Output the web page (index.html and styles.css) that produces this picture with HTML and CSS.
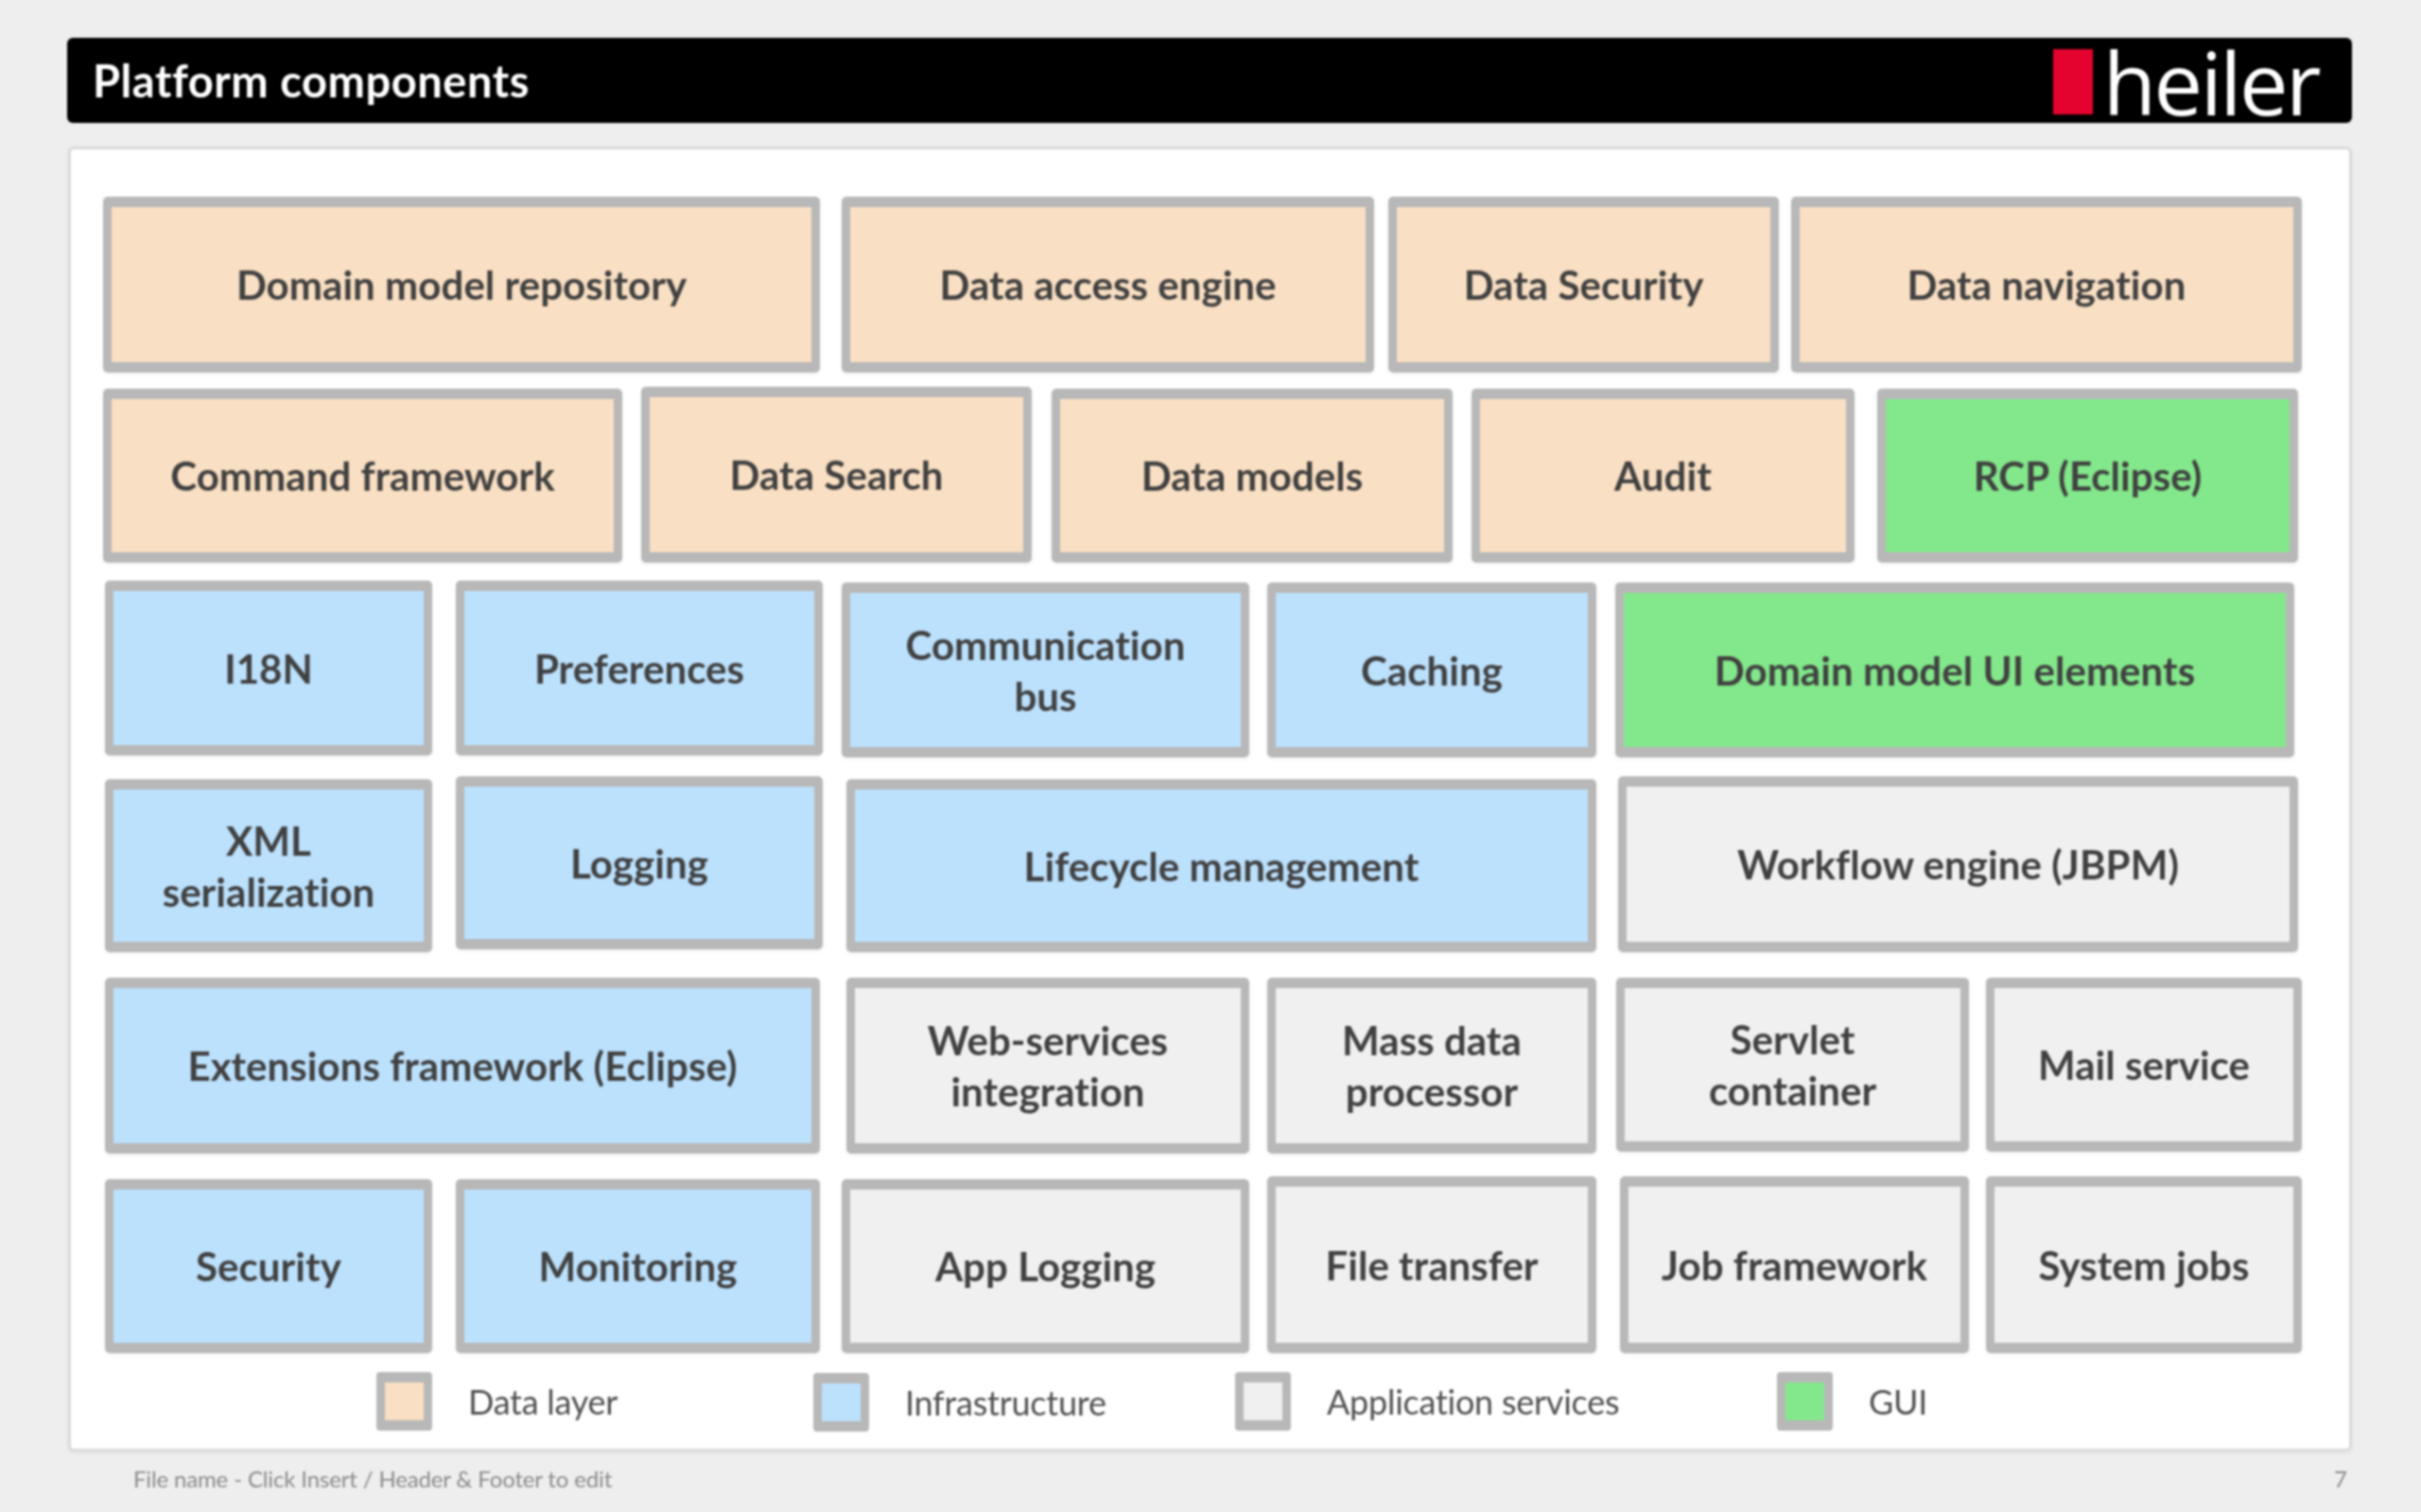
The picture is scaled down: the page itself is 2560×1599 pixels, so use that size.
FILE: index.html
```html
<!DOCTYPE html>
<html lang="en">
<head>
<meta charset="utf-8">
<title>Platform components</title>
<link rel="stylesheet" href="styles.css">
</head>
<body>
<div class="slide">
  <header class="header">
    <h1 class="title">Platform components</h1>
    <div class="logo"><span class="logo-mark"></span><span class="logo-text">heiler</span></div>
  </header>
  <main class="panel">
    <div class="row row1">
      <div class="box data">Domain model repository</div>
      <div class="box data">Data access engine</div>
      <div class="box data">Data Security</div>
      <div class="box data">Data navigation</div>
    </div>
    <div class="row row2">
      <div class="box data">Command framework</div>
      <div class="box data up2">Data Search</div>
      <div class="box data">Data models</div>
      <div class="box data">Audit</div>
      <div class="box gui">RCP (Eclipse)</div>
    </div>
    <div class="row row3">
      <div class="box infra">I18N</div>
      <div class="box infra">Preferences</div>
      <div class="box infra down2">Communication<br>bus</div>
      <div class="box infra down2">Caching</div>
      <div class="box gui down2">Domain model UI elements</div>
    </div>
    <div class="row row4">
      <div class="box infra down3">XML<br>serialization</div>
      <div class="box infra">Logging</div>
      <div class="box infra down3">Lifecycle management</div>
      <div class="box app long3">Workflow engine (JBPM)</div>
    </div>
    <div class="row row5">
      <div class="box infra">Extensions framework (Eclipse)</div>
      <div class="box app">Web-services<br>integration</div>
      <div class="box app">Mass data<br>processor</div>
      <div class="box app short2">Servlet<br>container</div>
      <div class="box app short2">Mail service</div>
    </div>
    <div class="row row6">
      <div class="box infra">Security</div>
      <div class="box infra">Monitoring</div>
      <div class="box app">App Logging</div>
      <div class="box app up3">File transfer</div>
      <div class="box app up3">Job framework</div>
      <div class="box app up3">System jobs</div>
    </div>
    <div class="legend">
      <div class="legend-item item-data"><span class="swatch data"></span><span class="legend-label">Data layer</span></div>
      <div class="legend-item item-infra"><span class="swatch infra"></span><span class="legend-label">Infrastructure</span></div>
      <div class="legend-item item-app"><span class="swatch app"></span><span class="legend-label">Application services</span></div>
      <div class="legend-item item-gui"><span class="swatch gui"></span><span class="legend-label">GUI</span></div>
    </div>
  </main>
  <footer class="footer">
    <span class="footer-note">File name - Click Insert / Header &amp; Footer to edit</span>
    <span>7</span>
  </footer>
</div>
</body>
</html>
```
FILE: styles.css
```css
* { box-sizing: border-box; }
html, body { margin: 0; height: 100%; }
body { background: #eeeeee; font-family: Lato, "Open Sans", sans-serif; overflow: hidden; }
.slide { width: 2560px; height: 1599px; padding: 40px 73px 0 71px; display: flex; flex-direction: column; filter: blur(0.8px); }

.header { height: 90px; background: #000; border-radius: 6px; display: flex; justify-content: space-between; align-items: flex-start; padding: 0 35px 0 27px; }
.title { margin: 22px 0 0; color: #fff; font-size: 47px; line-height: 46px; font-weight: 700; letter-spacing: 0.55px; }
.logo { display: flex; align-items: flex-start; margin-top: 12px; }
.logo-mark { width: 42px; height: 69px; background: #e4032e; }
.logo-text { margin-left: 11px; color: #fff; font-family: "Open Sans", sans-serif; font-size: 92px; font-weight: 500; line-height: 69px; letter-spacing: -2.6px; }

.panel { margin: 25px 0 0 1px; height: 1380px; background: #fff; border: 3px solid #dadada; border-radius: 6px; padding: 50px 0 0 34px; box-shadow: 0 2px 4px rgba(0,0,0,.06); }

.row { display: flex; align-items: stretch; }
.box { flex: none; display: flex; align-items: center; justify-content: center; text-align: center; border-style: solid; border-width: 11px 9px; border-color: #b8b8b8; border-radius: 5px; color: #404040; font-size: 42px; line-height: 54px; font-weight: 700; letter-spacing: 0.05px; box-shadow: 0 2px 5px rgba(0,0,0,.05); }
.data { background: #f9dfc3; }
.infra { background: #bce1fd; }
.app { background: #f0f0f0; }
.gui { background: #83e88b; }

.up2 { margin-top: -2px; }
.up3 { margin-top: -3px; }
.down2 { margin-top: 2px; margin-bottom: -2px; }
.down3 { margin-top: 3px; margin-bottom: -3px; }
.long3 { margin-bottom: -3px; }
.short2 { margin-bottom: 2px; }

.row1 { height: 186px; margin-bottom: 17px; }
.row1 .box:nth-child(1) { width: 758px; }
.row1 .box:nth-child(2) { width: 563px; margin-left: 23px; }
.row1 .box:nth-child(3) { width: 413px; margin-left: 15px; }
.row1 .box:nth-child(4) { width: 540px; margin-left: 13px; }

.row2 { height: 184px; margin-bottom: 19px; }
.row2 .box:nth-child(1) { width: 549px; }
.row2 .box:nth-child(2) { width: 413px; margin-left: 20px; }
.row2 .box:nth-child(3) { width: 424px; margin-left: 21px; }
.row2 .box:nth-child(4) { width: 405px; margin-left: 20px; }
.row2 .box:nth-child(5) { width: 445px; margin-left: 24px; }

.row3 { height: 185px; padding-left: 2px; margin-bottom: 22px; }
.row3 .box:nth-child(1) { width: 346px; }
.row3 .box:nth-child(2) { width: 388px; margin-left: 25px; }
.row3 .box:nth-child(3) { width: 431px; margin-left: 20px; }
.row3 .box:nth-child(4) { width: 348px; margin-left: 19px; }
.row3 .box:nth-child(5) { width: 718px; margin-left: 20px; }

.row4 { height: 183px; padding-left: 2px; margin-bottom: 30px; }
.row4 .box:nth-child(1) { width: 346px; }
.row4 .box:nth-child(2) { width: 388px; margin-left: 25px; }
.row4 .box:nth-child(3) { width: 793px; margin-left: 25px; }
.row4 .box:nth-child(4) { width: 719px; margin-left: 23px; }

.row5 { height: 186px; padding-left: 2px; margin-bottom: 27px; }
.row5 .box:nth-child(1) { width: 756px; }
.row5 .box:nth-child(2) { width: 426px; margin-left: 28px; }
.row5 .box:nth-child(3) { width: 348px; margin-left: 19px; }
.row5 .box:nth-child(4) { width: 373px; margin-left: 21px; }
.row5 .box:nth-child(5) { width: 334px; margin-left: 18px; }

.row6 { height: 184px; padding-left: 2px; margin-bottom: 20px; }
.row6 .box:nth-child(1) { width: 346px; }
.row6 .box:nth-child(2) { width: 385px; margin-left: 25px; }
.row6 .box:nth-child(3) { width: 431px; margin-left: 23px; }
.row6 .box:nth-child(4) { width: 348px; margin-left: 19px; }
.row6 .box:nth-child(5) { width: 369px; margin-left: 25px; }
.row6 .box:nth-child(6) { width: 334px; margin-left: 18px; }

.legend { display: flex; height: 62px; }
.legend-item { display: flex; align-items: center; }
.item-data { margin-left: 289px; width: 462px; }
.item-infra { width: 446px; margin-top: 1px; }
.item-app { width: 573px; }
.swatch { width: 59px; height: 62px; border-style: solid; border-width: 11px 9px; border-color: #b8b8b8; border-radius: 4px; }
.legend-label { margin-left: 38px; color: #505050; font-size: 36px; letter-spacing: -0.25px; }

.footer { display: flex; justify-content: space-between; padding: 14px 5px 0 70px; color: #8a8a8a; font-size: 24px; line-height: 30px; }
.footer-note { letter-spacing: -0.15px; }
```
